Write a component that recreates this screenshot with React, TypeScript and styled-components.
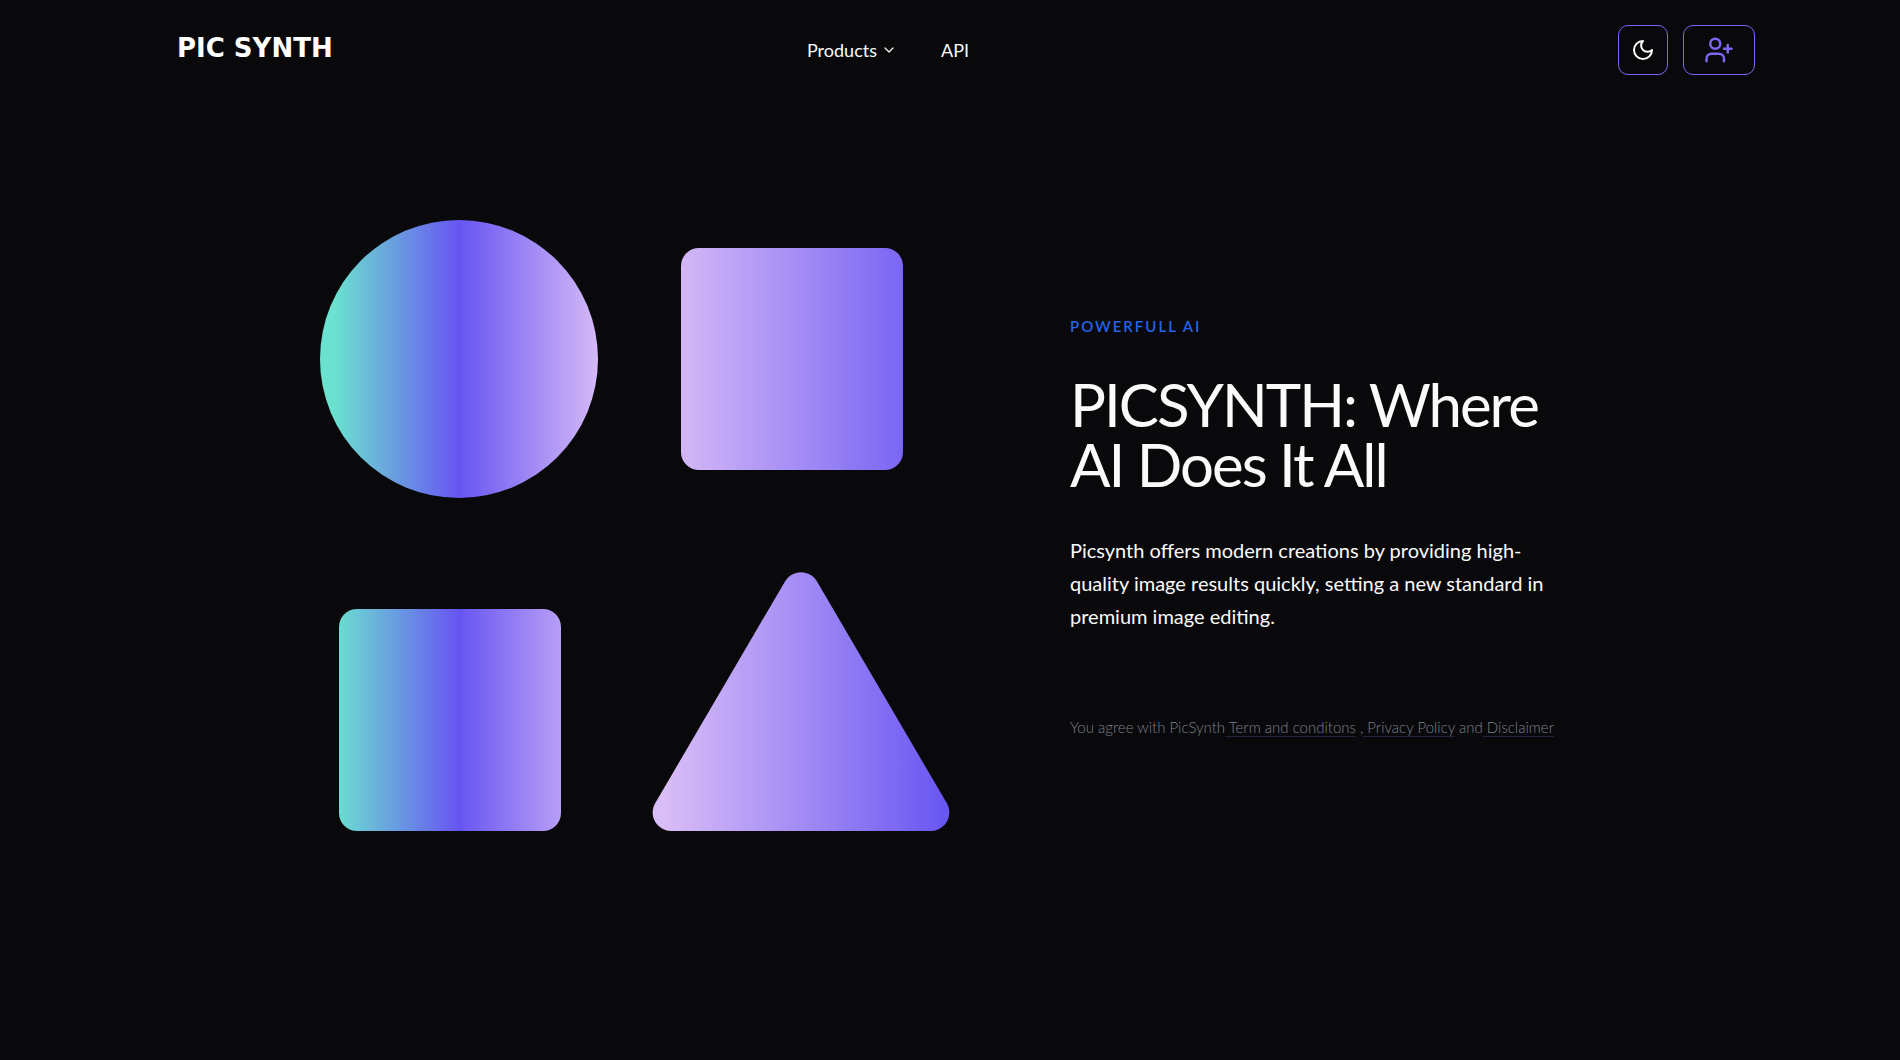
import React from "react";
import styled, { createGlobalStyle } from "styled-components";

const GlobalStyle = createGlobalStyle`
  *, *::before, *::after { box-sizing: border-box; }
  body {
    margin: 0;
    background: #09090b;
    color: #fafafa;
    font-family: Lato, "Open Sans", sans-serif;
  }
`;

const Page = styled.div`
  display: flex;
  flex-direction: column;
  min-height: 100vh;
`;

const Header = styled.header`
  display: flex;
  align-items: center;
  justify-content: space-between;
  width: 100%;
  max-width: 1610px;
  height: 100px;
  margin: 0 auto;
  padding: 0 0 0 32px;
`;

const Side = styled.div<{ $end?: boolean }>`
  display: flex;
  flex: 1;
  gap: 15px;
  justify-content: ${(p) => (p.$end ? "flex-end" : "flex-start")};
`;

const Logo = styled.a`
  color: #fff;
  font: 700 26px/32px "DejaVu Sans", sans-serif;
  text-decoration: none;
  white-space: nowrap;
  padding-bottom: 4px;
`;

const Nav = styled.nav`
  display: flex;
  align-items: center;
  gap: 46px;
  margin-right: 156px;
`;

const navText = `
  color: #fafafa;
  font: 400 18px/24px Lato, sans-serif;
`;

const MenuButton = styled.button`
  ${navText}
  display: flex;
  align-items: center;
  gap: 6px;
  padding: 0;
  border: 0;
  background: none;
`;

const NavLink = styled.a`
  ${navText}
  text-decoration: none;
`;

const IconButton = styled.button<{ $wide?: boolean }>`
  display: flex;
  align-items: center;
  justify-content: center;
  width: ${(p) => (p.$wide ? 72 : 50)}px;
  height: 50px;
  padding: 0;
  border: 1px solid #7c66f5;
  border-radius: 10px;
  background: none;
  color: ${(p) => (p.$wide ? "#7c66f5" : "#fff")};
`;

const Icon = styled.svg`
  display: block;
  fill: none;
  stroke: currentColor;
  stroke-linecap: round;
  stroke-linejoin: round;
`;

const Hero = styled.main`
  display: grid;
  grid-template-columns: minmax(0, 630fr) minmax(0, 510fr);
  column-gap: 120px;
  align-items: center;
  width: 100%;
  max-width: 1260px;
  margin: 0 auto;
  padding: 120px 0;
`;

const Shapes = styled.svg`
  display: block;
  width: 100%;
  height: auto;
`;

const Eyebrow = styled.p`
  margin: 0 0 36px;
  color: #2563eb;
  font-size: 15px;
  line-height: 24px;
  font-weight: 600;
  letter-spacing: 2px;
`;

const Title = styled.h1`
  margin: 0 0 40px;
  font-size: 60px;
  line-height: 60px;
  font-weight: 400;
  letter-spacing: -2px;
`;

const Lead = styled.p`
  max-width: 490px;
  margin: 0 0 82px;
  font-size: 20px;
  line-height: 33px;
`;

const Legal = styled.p`
  margin: 0;
  color: #7a808c;
  font-size: 15px;
  line-height: 24px;
  font-weight: 300;
`;

const LegalLink = styled.a`
  color: inherit;
  text-decoration: none;
  white-space: pre;
  border-bottom: 1px solid #27213a;
`;

export default function App() {
  return (
    <>
      <GlobalStyle />
      <Page>
        <Header>
          <Side>
            <Logo href="#">PIC SYNTH</Logo>
          </Side>
          <Nav>
            <MenuButton type="button">
              Products
              <Icon width="12" height="12" viewBox="0 0 12 12" strokeWidth="1.2" aria-hidden="true">
                <path d="M2 4l4 4 4-4" />
              </Icon>
            </MenuButton>
            <NavLink href="#api">API</NavLink>
          </Nav>
          <Side $end>
            <IconButton type="button" aria-label="Toggle theme">
              <Icon width="24" height="24" viewBox="0 0 24 24" strokeWidth="2" aria-hidden="true">
                <path d="M12 3a6 6 0 0 0 9 9 9 9 0 1 1-9-9Z" />
              </Icon>
            </IconButton>
            <IconButton type="button" aria-label="Sign up" $wide>
              <Icon width="30" height="30" viewBox="0 0 24 24" strokeWidth="2" aria-hidden="true">
                <path d="M16 21v-2a4 4 0 0 0-4-4H6a4 4 0 0 0-4 4v2" />
                <circle cx="9" cy="7" r="4" />
                <path d="M19 8v6M22 11h-6" />
              </Icon>
            </IconButton>
          </Side>
        </Header>

        <Hero>
          <Shapes viewBox="0 0 630 612" role="img" aria-label="Gradient shapes">
            <defs>
              <linearGradient id="aurora" gradientUnits="userSpaceOnUse" x1="0" y1="0" x2="278" y2="0">
                <stop offset="0.05" stopColor="#6be2cf" />
                <stop offset="0.5" stopColor="#6755f2" />
                <stop offset="1" stopColor="#d5b9f8" />
              </linearGradient>
              <linearGradient id="lilac" gradientUnits="userSpaceOnUse" x1="333" y1="0" x2="630" y2="0">
                <stop offset="0.04" stopColor="#d9bdf7" />
                <stop offset="1" stopColor="#6755f2" />
              </linearGradient>
            </defs>
            <circle cx="139" cy="139" r="139" fill="url(#aurora)" />
            <rect x="361" y="28" width="222" height="222" rx="18" fill="url(#lilac)" />
            <rect x="19" y="389" width="222" height="222" rx="18" fill="url(#aurora)" />
            <path
              d="M465 361.500A18.500 18.500 0 0 1 497 361.500L627 583.500A18.500 18.500 0 0 1 611.500 611H350.500A18.500 18.500 0 0 1 335 583.500Z"
              fill="url(#lilac)"
            />
          </Shapes>

          <section>
            <Eyebrow>POWERFULL AI</Eyebrow>
            <Title>PICSYNTH: Where AI Does It All</Title>
            <Lead>
              Picsynth offers modern creations by providing high-quality image results quickly, setting a new
              standard in premium image editing.
            </Lead>
            <Legal>
              You agree with PicSynth
              <LegalLink href="#terms"> Term and conditons</LegalLink> ,
              <LegalLink href="#privacy"> Privacy Policy</LegalLink> and
              <LegalLink href="#disclaimer"> Disclaimer</LegalLink>
            </Legal>
          </section>
        </Hero>
      </Page>
    </>
  );
}
